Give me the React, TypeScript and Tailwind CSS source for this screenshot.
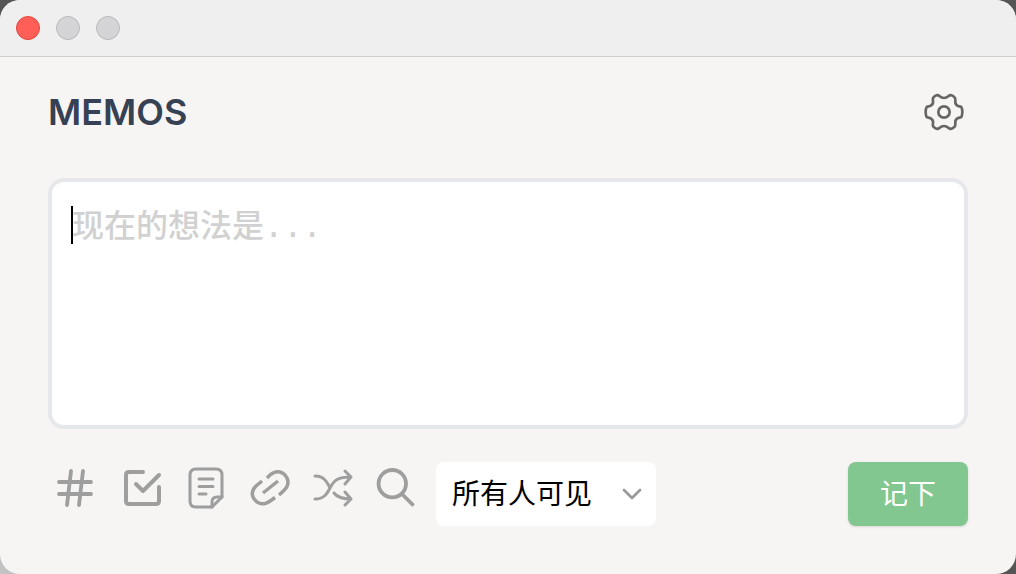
import { useState } from "react";
import { ChevronDown } from "lucide-react";

const TOOLS: { id: string; label: string; width: number; shape: React.ReactNode }[] = [
  {
    id: "tag", label: "标签", width: 3.8,
    shape: <path d="M3 16H35M3 28H35M15 5L11 39M27 5L23 39" />,
  },
  {
    id: "todo", label: "待办", width: 4,
    shape: <path d="M23 6H9Q6 6 6 9V35Q6 38 9 38H36Q39 38 39 35V21M16 18L23 25L39 9" />,
  },
  {
    id: "note", label: "笔记", width: 3,
    shape: (
      <>
        <path d="M12 3H32Q38 3 38 9V31L28 41H12Q6 41 6 35V9Q6 3 12 3Z" />
        <path d="M28 41V36Q28 31 33 31H38M15 13H29M15 20.500H29M15 28H22" />
      </>
    ),
  },
  {
    id: "link", label: "链接", width: 3.5,
    shape: <path strokeLinecap="butt" d="M19 12L22 9C29 3 36 6 39 12C42 19 38 23 31 29M14 15L8 20C2 26 4 32 9 36C15 40 20 37 27 31.500M15 27L30 15" />,
  },
  {
    id: "random", label: "随机", width: 3,
    shape: <path d="M3 10C12 10 15 16 18 22C22 14 26 11 39 11M33 5L39 11L33 18M3 33C12 33 15 28 18 22M22 27C25 31 29 33 39 33M33 26L39 33L33 39" />,
  },
  {
    id: "search", label: "搜索", width: 3.8,
    shape: <><circle cx="16.300" cy="17.700" r="13.700" /><path d="M26 28L36.500 38.500" /></>,
  },
];

function GearIcon() {
  return (
    <svg viewBox="0 0 120 120" className="size-10" fill="none" stroke="currentColor" strokeWidth="8" strokeLinejoin="round">
      <path d="M7 47Q3 60 7 73C8 77 12 76 18 78C25 81 28 86 27 93C26 100 25 102 30 106C35 110 42 112 46 108C52 103 54 102 60 102C66 102 68 103 74 108C78 112 85 110 90 106C95 102 94 100 94 93C93 86 96 81 102 78C108 76 112 77 113 73Q117 60 113 47C112 43 108 44 102 42C96 39 93 34 94 27C94 20 95 18 90 14C85 10 78 8 74 12C68 17 66 18 60 18C54 18 52 17 46 12C42 8 35 10 30 14C25 18 26 20 27 27C28 34 25 39 18 42C12 44 8 43 7 47Z" />
      <circle cx="60" cy="60" r="17" />
    </svg>
  );
}

function TitleBar() {
  return (
    <header className="flex h-[57px] items-center gap-4 border-b border-[#cfcfcf] bg-[#efefef] px-4">
      <button aria-label="关闭" className="size-6 rounded-full border border-[#e2463f] bg-[#ff5f57]" />
      <button aria-label="最小化" className="size-6 rounded-full border border-[#b9b9bb] bg-[#d4d4d6]" />
      <button aria-label="缩放" className="size-6 rounded-full border border-[#b9b9bb] bg-[#d4d4d6]" />
    </header>
  );
}

export default function App() {
  const [memo, setMemo] = useState("");
  const [visibility, setVisibility] = useState("public");

  return (
    <div className="min-h-screen bg-linear-to-tr from-[#c4c4c4] to-[#555] to-40% font-['Inter','Noto_Sans_CJK_SC',sans-serif]">
      <div className="flex min-h-screen flex-col overflow-hidden rounded-[20px] bg-[#f6f5f4]">
        <TitleBar />
        <main className="px-12 pt-[35px] pb-12">
          <div className="flex items-center justify-between pr-1">
            <h1 className="text-[36px] leading-10 font-semibold text-gray-700">MEMOS</h1>
            <button aria-label="设置" className="text-[#666]"><GearIcon /></button>
          </div>

          <div className="relative mt-[46px]">
            <textarea
              aria-label="备忘内容"
              value={memo}
              onChange={(e) => setMemo(e.target.value)}
              placeholder="现在的想法是..."
              className="block h-[251px] w-full resize-none rounded-2xl border-4 border-gray-200 bg-white px-5 py-5 font-['DejaVu_Sans_Mono','Noto_Sans_CJK_SC',monospace] text-[32px] leading-[48px] font-medium text-black outline-none placeholder:text-[#d1d1d1]"
            />
            {memo === "" && <span className="pointer-events-none absolute top-7 left-[23px] h-[38px] w-0.5 bg-black" />}
          </div>

          <div className="mt-[33px] flex items-start justify-between">
            <div className="flex items-start gap-4 pl-2">
              <div className="flex gap-5 pt-1 text-[#9e9e9e]">
                {TOOLS.map((tool) => (
                  <button key={tool.id} aria-label={tool.label}>
                    <svg viewBox="0 0 44 44" className="size-11" fill="none" stroke="currentColor" strokeWidth={tool.width} strokeLinecap="round" strokeLinejoin="round">
                      {tool.shape}
                    </svg>
                  </button>
                ))}
              </div>
              <div className="relative">
                <select
                  aria-label="可见范围"
                  value={visibility}
                  onChange={(e) => setVisibility(e.target.value)}
                  className="h-16 w-[220px] appearance-none rounded-lg bg-white px-4 text-[28px] text-black outline-none"
                >
                  <option value="public">所有人可见</option>
                </select>
                <ChevronDown className="pointer-events-none absolute top-4 right-2 size-8 text-[#999]" strokeWidth={2} />
              </div>
            </div>
            <button className="h-16 w-30 rounded-lg bg-[#82c78f] text-[28px] text-white shadow-sm">记下</button>
          </div>
        </main>
      </div>
    </div>
  );
}
